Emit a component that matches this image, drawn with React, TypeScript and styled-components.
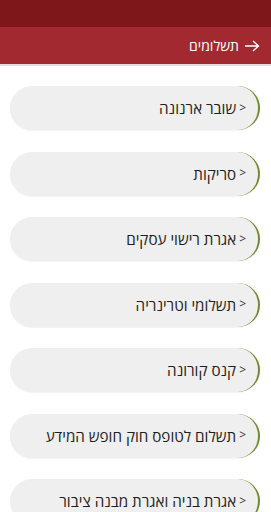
import styled, { createGlobalStyle } from "styled-components";

const GlobalStyle = createGlobalStyle`
	body {
		margin: 0;
		background: #ffffff;
		font-family: "Open Sans", "Liberation Sans", Arial, sans-serif;
	}
`;

const Page = styled.div`
	width: 271px;
	min-height: 512px;
	overflow: hidden;
	direction: rtl;
`;

const StatusBar = styled.div`
	height: 27px;
	background: #7e1719;
`;

const Header = styled.div`
	height: 37px;
	background: #a2292f;
	display: flex;
	align-items: center;
	gap: 5px;
	padding-right: 11px;
	color: #ffffff;
	font-size: 14px;
	border-bottom: 2px solid #e4dcdc;
`;

const Arrow = styled.svg`
	width: 16px;
	height: 12px;
	flex-shrink: 0;
`;

const List = styled.div`
	display: flex;
	flex-direction: column;
	gap: 21.5px;
	padding: 20px 11px 0 10px;
`;

const Card = styled.div`
	height: 44px;
	border-radius: 22px;
	background: #efefef;
	border-right: 2px solid #6e8b2c;
	box-shadow: 0 1px 1px rgba(0, 0, 0, 0.05);
	display: flex;
	align-items: center;
	gap: 3px;
	padding-right: 12px;
	font-size: 15.2px;
	color: #1e1e1e;
`;

const Chevron = styled.span`
	font-size: 12px;
	color: #333;
	line-height: 1;
	margin-top: -1px;
`;

const items = [
	"שובר ארנונה",
	"סריקות",
	"אגרת רישוי עסקים",
	"תשלומי וטרינריה",
	"קנס קורונה",
	"תשלום לטופס חוק חופש המידע",
	"אגרת בניה ואגרת מבנה ציבור",
];

function App() {
	return (
		<Page>
			<GlobalStyle />
			<StatusBar />
			<Header>
				<Arrow viewBox="0 0 16 12">
					<path
						d="M1 6 H14 M9 1 L14.5 6 L9 11"
						fill="none"
						stroke="#fff"
						strokeWidth="1.4"
					/>
				</Arrow>
				<span>תשלומים</span>
			</Header>
			<List>
				{items.map((item) => (
					<Card key={item}>
						<Chevron>&lt;</Chevron>
						<span>{item}</span>
					</Card>
				))}
			</List>
		</Page>
	);
}
export default App;
